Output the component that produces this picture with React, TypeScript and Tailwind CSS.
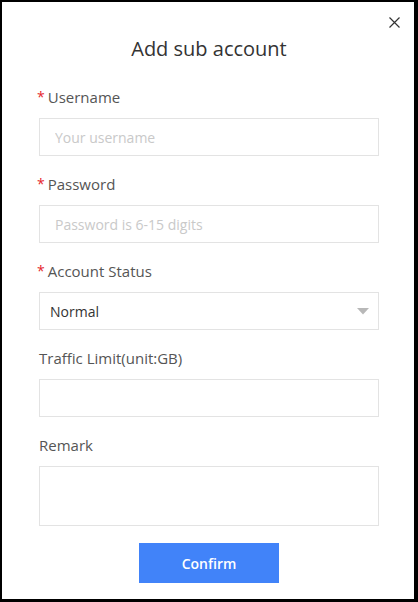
import React from 'react'

const font = { fontFamily: '"Open Sans", "Noto Sans", sans-serif' }

const inputCls =
  'block w-[340px] h-[38px] border border-[#e3e3e3] px-[15px] text-[14px] text-[#333] placeholder:text-[#c9c9c9] outline-none'

function Label({ text, required }: { text: string; required?: boolean }) {
  return (
    <div className="h-[22px] leading-[22px] mb-[10px] text-[15px] font-medium text-[#555] flex items-center">
      {required && <span className="text-[#e5262b] text-[14px] mr-[3px] -ml-[2px]">*</span>}
      <span>{text}</span>
    </div>
  )
}

export default function App() {
  return (
    <div
      className="relative w-[418px] h-[602px] bg-white border-black border-t-2 border-l-2 border-r-4 border-b-[3px]"
      style={font}
    >
      <button className="absolute top-[13px] right-[13px] w-[14px] h-[14px] flex items-center justify-center text-[#333]">
        <svg width="11" height="11" viewBox="0 0 11 11" fill="none" stroke="currentColor" strokeWidth="1.2">
          <path d="M0.5 0.5L10.5 10.5M10.5 0.5L0.5 10.5" />
        </svg>
      </button>

      <div className="pt-[33px] pl-[37px] pr-[35px]">
        <h2 className="h-[28px] leading-[28px] text-center text-[20px] text-[#333]">Add sub account</h2>

        <div className="mt-[23px]">
          <Label text="Username" required />
          <input className={inputCls} placeholder="Your username" />
        </div>

        <div className="mt-[17px]">
          <Label text="Password" required />
          <input className={inputCls} placeholder="Password is 6-15 digits" />
        </div>

        <div className="mt-[17px]">
          <Label text="Account Status" required />
          <div className="w-[340px] h-[38px] border border-[#e3e3e3] pl-[10px] pr-[9px] flex items-center justify-between">
            <span className="text-[14px] text-[#333]">Normal</span>
            <svg width="12" height="7" viewBox="0 0 12 7">
              <path d="M0 0H12L6 6.5Z" fill="#b8b8b8" />
            </svg>
          </div>
        </div>

        <div className="mt-[17px]">
          <Label text="Traffic Limit(unit:GB)" />
          <input className={inputCls} />
        </div>

        <div className="mt-[17px]">
          <Label text="Remark" />
          <textarea className="block w-[340px] h-[60px] border border-[#e3e3e3] px-[15px] py-[8px] text-[14px] text-[#333] outline-none resize-none" />
        </div>

        <div className="mt-[17px] flex justify-center">
          <button className="w-[140px] h-[40px] bg-[#4183f9] text-white text-[14px] font-semibold">Confirm</button>
        </div>
      </div>
    </div>
  )
}
